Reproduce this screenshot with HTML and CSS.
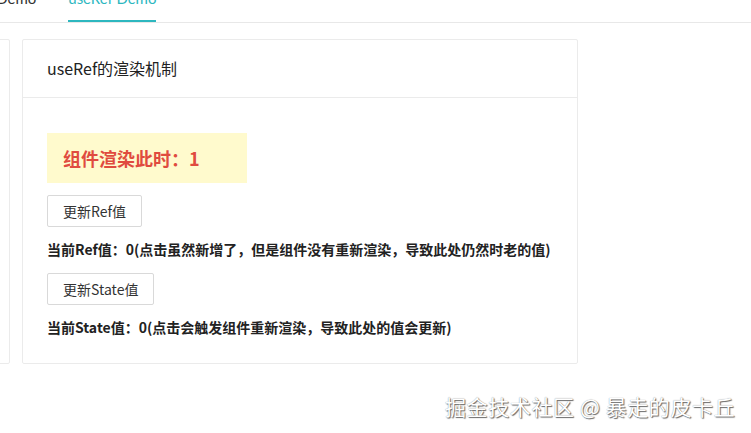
FILE: index.html
```html
<!DOCTYPE html>
<html lang="zh-CN">
<head>
    <meta charset="UTF-8">
    <meta name="viewport" content="width=device-width, initial-scale=1.0">
    <title>useRef Demo</title>
    <link rel="stylesheet" href="styles.css">
</head>
<body>
    <div class="tabs">
        <div class="tab">useState Demo</div>
        <div class="tab active">useRef Demo</div>
    </div>

    <div class="cards">
        <div class="card side"></div>

        <div class="card">
            <div class="card-header">useRef的渲染机制</div>
            <div class="card-body">
                <div class="count">组件渲染此时：1</div>
                <button class="btn">更新Ref值</button>
                <p class="value">当前Ref值：0(点击虽然新增了，但是组件没有重新渲染，导致此处仍然时老的值)</p>
                <button class="btn">更新State值</button>
                <p class="value">当前State值：0(点击会触发组件重新渲染，导致此处的值会更新)</p>
            </div>
        </div>
    </div>

    <!-- site watermark -->
    <div class="mark">掘金技术社区 @ 暴走的皮卡丘</div>
</body>
</html>
```

FILE: styles.css
```css
body {
    margin: 0;
    background: #fff;
    color: #222;
    font-family: "Noto Sans CJK SC", sans-serif;
    overflow: hidden;
}
.tabs {
    display: flex;
    gap: 32px;
    margin-top: -17px;
    margin-left: -64px;
    border-bottom: 1px solid #e8e8e8;
    font-family: Lato, "Noto Sans CJK SC", sans-serif;
}
.tab {
    font-size: 15px;
    line-height: 31px;
    padding: 0 0 8px;
    color: #333;
}
.tab.active {
    color: #2db7bf;
    border-bottom: 2px solid #2db7bf;
    padding-bottom: 6px;
}
.cards {
    display: flex;
    gap: 12px;
    margin-top: 16px;
    margin-left: -290px;
}
.card {
    width: 554px;
    border: 1px solid #ebebeb;
    border-radius: 2px;
    background: #fff;
}
.card.side {
    width: 298px;
}
.card-header {
    height: 57px;
    line-height: 57px;
    padding: 0 24px;
    font-size: 16px;
    color: #222;
    border-bottom: 1px solid #ebebeb;
}
.card-body {
    padding: 35px 24px 26px;
}
.count {
    width: 168px;
    height: 50px;
    line-height: 50px;
    padding: 0 16px;
    background: #fffacd;
    color: #e04b3f;
    font-size: 18px;
    font-weight: bold;
    margin-bottom: 12px;
}
.btn {
    display: block;
    height: 32px;
    padding: 0 15px;
    font-family: inherit;
    font-size: 14px;
    color: #333;
    background: #fff;
    border: 1px solid #d9d9d9;
    border-radius: 2px;
}
.value {
    margin: 12px 0 14px;
    font-size: 14px;
    font-weight: bold;
    line-height: 20px;
    color: #222;
}
.value:last-child {
    margin-bottom: 0;
}
.mark {
    position: absolute;
    left: 445px;
    top: 391px;
    font-size: 21px;
    letter-spacing: 0.6px;
    color: #fff;
    text-shadow: 1px 1px 1px #666, 0 0 1px #888;
}
```
